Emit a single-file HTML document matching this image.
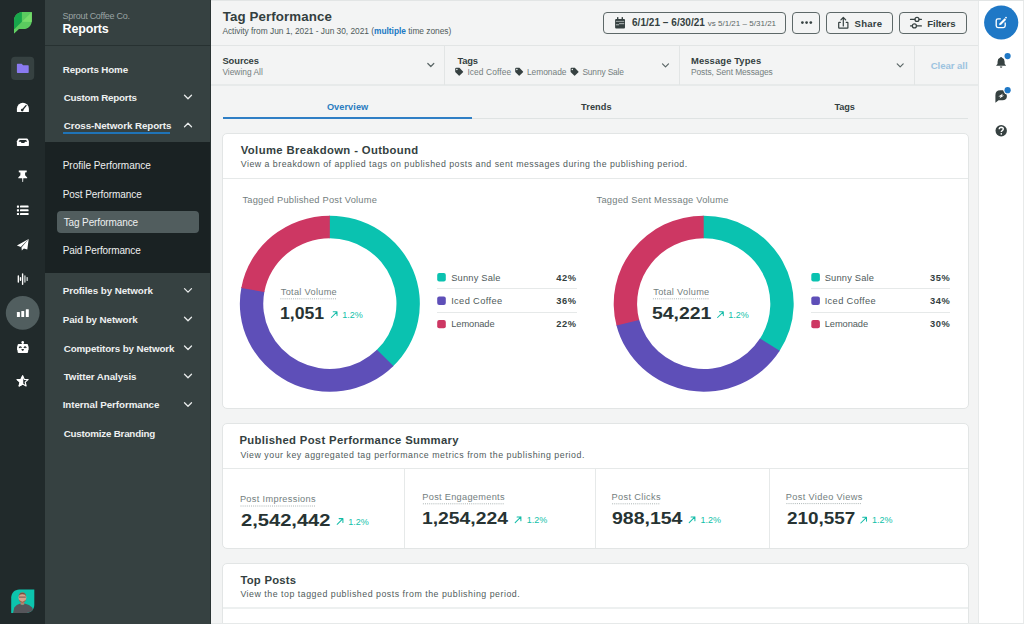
<!DOCTYPE html>
<html><head><meta charset="utf-8"><title>Tag Performance</title>
<style>
html,body{margin:0;padding:0;}
body{width:1024px;height:624px;position:relative;overflow:hidden;background:#f3f4f4;font-family:"Liberation Sans",sans-serif;}
.t{position:absolute;white-space:nowrap;line-height:1;font-family:"Liberation Sans",sans-serif;}
svg{overflow:visible}
</style></head><body>
<!-- left rail -->
<div style="position:absolute;left:0;top:0;width:45px;height:624px;background:#212a2b"></div>
<!-- side nav -->
<div style="position:absolute;left:45px;top:0;width:165px;height:624px;background:#364141"></div>
<div style="position:absolute;left:45px;top:45px;width:165px;height:1px;background:#273131"></div>
<div style="position:absolute;left:45px;top:142px;width:165px;height:131px;background:#1a2223"></div>
<div style="position:absolute;left:57px;top:210.75px;width:142.25px;height:22.5px;border-radius:4px;background:#515d5e"></div>
<div style="position:absolute;left:62.5px;top:132px;width:107.5px;height:1.6px;background:#1f73b7"></div>
<div style="position:absolute;left:209.5px;top:0;width:1px;height:624px;background:#2a3333"></div>
<!-- main -->
<div style="position:absolute;left:210.5px;top:0;width:768px;height:624px;background:#f3f4f4"></div>

<div style="position:absolute;left:210.5px;top:45px;width:768px;height:1px;background:#e2e5e5"></div>
<div style="position:absolute;left:210.5px;top:84px;width:768px;height:2px;background:#e7eaea"></div>
<div style="position:absolute;left:444px;top:45px;width:1px;height:40px;background:#e2e5e5"></div>
<div style="position:absolute;left:679px;top:45px;width:1px;height:40px;background:#e2e5e5"></div>
<div style="position:absolute;left:914px;top:45px;width:1px;height:40px;background:#e2e5e5"></div>
<!-- right rail -->
<div style="position:absolute;left:978px;top:0;width:46px;height:624px;background:#ffffff;border-left:1px solid #e7eaea;box-sizing:border-box"></div>
<div style="position:absolute;left:1023px;top:0;width:1px;height:624px;background:#e8eaea"></div>
<div style="position:absolute;left:210.5px;top:0;width:814px;height:1px;background:#e2e5e5"></div>

<!-- buttons -->
<div style="position:absolute;left:603.3px;top:11.6px;width:183.2px;height:22.1px;border:1px solid #5d6868;border-radius:4px;box-sizing:border-box"></div>
<div style="position:absolute;left:792.3px;top:11.6px;width:28.1px;height:22.1px;border:1px solid #5d6868;border-radius:4px;box-sizing:border-box"></div>
<div style="position:absolute;left:826.3px;top:11.6px;width:66.6px;height:22.1px;border:1px solid #5d6868;border-radius:4px;box-sizing:border-box"></div>
<div style="position:absolute;left:899.1px;top:11.6px;width:67.8px;height:22.1px;border:1px solid #5d6868;border-radius:4px;box-sizing:border-box"></div>

<!-- tabs underline -->
<div style="position:absolute;left:223px;top:118px;width:745px;height:1px;background:#dfe3e3"></div>
<div style="position:absolute;left:223px;top:117px;width:248.5px;height:2px;background:#2f7fc5"></div>

<!-- cards -->
<div style="position:absolute;left:222px;top:133px;width:747px;height:276px;background:#fff;border:1px solid #e2e5e5;border-radius:5px;box-sizing:border-box"></div>
<div style="position:absolute;left:223px;top:178px;width:745px;height:1px;background:#e6e9e9"></div>
<div style="position:absolute;left:437px;top:288px;width:140px;height:1px;background:#e6e9e9"></div>
<div style="position:absolute;left:437px;top:311.5px;width:140px;height:1px;background:#e6e9e9"></div>
<div style="position:absolute;left:811px;top:288px;width:138.5px;height:1px;background:#e6e9e9"></div>
<div style="position:absolute;left:811px;top:311.5px;width:138.5px;height:1px;background:#e6e9e9"></div>

<div style="position:absolute;left:222px;top:423px;width:747px;height:126px;background:#fff;border:1px solid #e2e5e5;border-radius:5px;box-sizing:border-box"></div>
<div style="position:absolute;left:223px;top:468px;width:745px;height:1px;background:#e6e9e9"></div>
<div style="position:absolute;left:404px;top:468px;width:1px;height:80px;background:#e6e9e9"></div>
<div style="position:absolute;left:594.5px;top:468px;width:1px;height:80px;background:#e6e9e9"></div>
<div style="position:absolute;left:769px;top:468px;width:1px;height:80px;background:#e6e9e9"></div>

<div style="position:absolute;left:222px;top:563px;width:747px;height:80px;background:#fff;border:1px solid #e2e5e5;border-radius:5px;box-sizing:border-box"></div>
<div style="position:absolute;left:223px;top:607px;width:745px;height:2px;background:#edf0f0"></div>
<div style="position:absolute;left:210.5px;top:623px;width:814px;height:1px;background:#e6e9e9"></div>

<!-- donuts & legends -->
<svg style="position:absolute;left:0;top:0" width="1024" height="624" viewBox="0 0 1024 624">
  <g id="donuts"><path d="M328.91,215.65 A90,88 0 0 1 392.82,366.52 L376.45,350.31 A66.6,65.3 0 0 0 329.15,238.35 Z" fill="#0ac2b0"/><path d="M393.49,365.88 A90,88 0 0 1 241.47,287.01 L264.45,291.30 A66.6,65.3 0 0 0 376.94,349.82 Z" fill="#5e4fb8"/><path d="M241.30,287.92 A90,88 0 0 1 329.85,215.65 L329.85,238.35 A66.6,65.3 0 0 0 264.32,291.97 Z" fill="#cd3763"/><path d="M702.76,215.65 A90,88 0 0 1 779.22,351.51 L759.59,339.17 A66.6,65.3 0 0 0 703.00,238.35 Z" fill="#0ac2b0"/><path d="M779.73,350.74 A90,88 0 0 1 616.30,324.64 L639.02,319.23 A66.6,65.3 0 0 0 759.96,338.59 Z" fill="#5e4fb8"/><path d="M616.53,325.53 A90,88 0 0 1 703.70,215.65 L703.70,238.35 A66.6,65.3 0 0 0 639.19,319.89 Z" fill="#cd3763"/></g>
</svg>

<svg style="position:absolute;left:0;top:0" width="1024" height="624" viewBox="0 0 1024 624">
<defs>
  <clipPath id="leaf"><path d="M14,33.6 L14,20.5 C14,15.8 17.8,12 22.5,12 L31.8,12 L31.8,20.8 C31.8,25.4 28.1,29.1 23.5,29.1 L18.8,29.1 Z"/></clipPath>
  <clipPath id="av"><path d="M11.2,612.9 L11.2,597.4 C11.2,593 14.8,589.4 19.2,589.4 L34.3,589.4 L34.3,604.9 C34.3,609.3 30.7,612.9 26.3,612.9 Z"/></clipPath>
</defs>
<!-- sprout logo -->
<g clip-path="url(#leaf)">
  <rect x="13" y="11" width="20" height="24" fill="#5bcb5f"/>
  <polygon points="13,11 21.9,11 21.9,21.8 13,30.5" fill="#17a64b"/>
  <polygon points="21.9,21.8 33,11 33,21.9" fill="#76dc6b"/>
  <polygon points="13,29.3 19.5,29.3 13,35" fill="#62d064"/>
</g>
<!-- folder button -->
<rect x="11.1" y="56.8" width="23.1" height="23.1" rx="4" fill="#364141"/>
<path d="M16.9,64.4 Q16.9,63.8 17.5,63.8 L21.6,63.8 L23.1,65.3 L28.1,65.3 Q28.7,65.3 28.7,65.9 L28.7,72.3 Q28.7,72.9 28.1,72.9 L17.5,72.9 Q16.9,72.9 16.9,72.3 Z" fill="#8a7af0"/>
<!-- gauge -->
<path d="M16.9,111.4 L16.9,108.8 A6,6 0 0 1 28.9,108.8 L28.9,111.4 Q28.9,112 28.3,112 L17.5,112 Q16.9,112 16.9,111.4 Z" fill="#fff"/>
<line x1="22.3" y1="110" x2="26" y2="105.6" stroke="#212a2b" stroke-width="1.3" stroke-linecap="round"/>
<circle cx="22.2" cy="110.1" r="1.3" fill="#212a2b"/>
<!-- inbox -->
<path d="M18.9,138.5 L27,138.5 Q27.5,138.5 27.8,139 L28.9,141.3 L28.9,145.3 Q28.9,145.9 28.3,145.9 L17.5,145.9 Q16.9,145.9 16.9,145.3 L16.9,141.3 L18.1,139 Q18.4,138.5 18.9,138.5 Z" fill="#fff"/>
<path d="M19.7,139.9 L26.1,139.9 L27.2,141.8 L25.1,141.8 L24.2,143 L21.6,143 L20.7,141.8 L18.6,141.8 Z" fill="#212a2b"/>
<!-- pin -->
<path d="M18.8,170.6 L26.7,170.6 L26.7,172.3 L25.1,172.6 L25.1,175.2 L27.2,177.6 L27.2,178.3 L23.3,178.3 L23.1,181.9 L22.4,181.9 L22.2,178.3 L18.3,178.3 L18.3,177.6 L20.4,175.2 L20.4,172.6 L18.8,172.3 Z" fill="#fff"/>
<!-- list -->
<g fill="#fff">
<rect x="16.9" y="205.5" width="2.1" height="2.2" rx="0.4"/><rect x="20" y="205.6" width="8.6" height="2" rx="0.6"/>
<rect x="16.9" y="209.2" width="2.1" height="2.2" rx="0.4"/><rect x="20" y="209.3" width="8.6" height="2" rx="0.6"/>
<rect x="16.9" y="212.9" width="2.1" height="2.2" rx="0.4"/><rect x="20" y="213" width="8.6" height="2" rx="0.6"/>
</g>
<!-- plane -->
<path d="M28.7,239 L16.9,245.6 L20.8,246.9 Z" fill="#fff"/>
<path d="M28.7,239 L21.5,247.6 L21.8,250.6 L23.9,248.4 L27.3,249.6 Z" fill="#fff"/>
<!-- waveform -->
<g stroke-linecap="round" stroke-width="1.4">
<line x1="18.35" y1="276" x2="18.35" y2="282" stroke="#fff"/>
<line x1="20.5" y1="277.8" x2="20.5" y2="280.2" stroke="#fff"/>
<line x1="22.6" y1="273.9" x2="22.6" y2="284.2" stroke="#fff"/>
<line x1="24.9" y1="276" x2="24.9" y2="282" stroke="#c3c9c9"/>
<line x1="27.2" y1="277.6" x2="27.2" y2="280.4" stroke="#c3c9c9"/>
</g>
<!-- reports active -->
<circle cx="22.7" cy="312.9" r="16.9" fill="#515e5f"/>
<g fill="#fff">
<rect x="16.9" y="312" width="3" height="5" rx="0.5"/>
<rect x="21.3" y="310.9" width="2.9" height="6.1" rx="0.5"/>
<rect x="25.8" y="309.2" width="3" height="7.8" rx="0.5"/>
</g>
<!-- bot -->
<circle cx="22.7" cy="342.4" r="1.3" fill="#fff"/>
<rect x="22.1" y="342.5" width="1.2" height="2" fill="#fff"/>
<rect x="17.6" y="344" width="10.5" height="8.9" rx="1.2" fill="#fff"/>
<rect x="17.1" y="346" width="11.5" height="4.5" rx="1" fill="#fff"/>
<path d="M19.2,347.9 Q20.3,345.7 21.4,347.9 M24,347.9 Q25.1,345.7 26.2,347.9" stroke="#212a2b" stroke-width="1.15" fill="none"/>
<path d="M21.4,349.1 L24,349.1 Q23.9,350.9 22.7,350.9 Q21.5,350.9 21.4,349.1 Z" fill="#212a2b"/>
<!-- star -->
<path d="M22.65,375.9 L24.2,379.3 L28.1,379.6 L25.2,382.1 L26.1,385.9 L22.65,383.9 L19.2,385.9 L20.1,382.1 L17.2,379.6 L21.1,379.3 Z" fill="none" stroke="#fff" stroke-width="1.2" stroke-linejoin="round"/>
<path d="M22.65,375.9 L21.1,379.3 L17.2,379.6 L20.1,382.1 L19.2,385.9 L22.65,383.9 Z" fill="#fff" stroke="#fff" stroke-width="1.2" stroke-linejoin="round"/>
<!-- avatar -->
<g clip-path="url(#av)">
  <rect x="10" y="588" width="26" height="26" fill="#0cc4ad"/>
  <path d="M12.8,614 L14.3,607.6 Q16.3,604.6 20.3,603.6 L22.4,605.2 L24.6,603.6 Q29.6,604.6 32.2,607.6 L34.8,614 Z" fill="#56565b"/>
  <rect x="20.6" y="601.5" width="3.6" height="3.2" fill="#b7806d"/>
  <ellipse cx="22.4" cy="597.4" rx="3.9" ry="4.9" fill="#d5a28c"/>
  <path d="M18.7,596.5 Q18.6,592.6 22.4,592.4 Q26.2,592.6 26.1,596.5 Q25.5,594 22.4,594.2 Q19.3,594 18.7,596.5 Z" fill="#7a5140"/>
  <path d="M19,599.6 Q22.4,603.8 25.8,599.6 Q25.6,602.4 22.4,602.8 Q19.2,602.4 19,599.6 Z" fill="#9a6650"/>
  <rect x="19" y="596.6" width="6.8" height="1" fill="#4a3a36" opacity="0.7"/>
</g>

<!-- right rail: compose -->
<circle cx="1001.2" cy="22.5" r="17.1" fill="#1f78c6"/>
<path d="M1000.8,18.8 L998,18.8 Q996.2,18.8 996.2,20.6 L996.2,25.8 Q996.2,27.6 998,27.6 L1003.4,27.6 Q1005.2,27.6 1005.2,25.8 L1005.2,22.6" fill="none" stroke="#fff" stroke-width="1.35"/>
<path d="M999.1,25.2 L999.6,23.2 L1004.6,18.2 L1006.1,19.7 L1001.1,24.7 Z" fill="#fff"/>
<circle cx="1006" cy="17.6" r="0.9" fill="#fff"/>
<!-- bell -->
<path d="M1001.1,56.9 Q1002,56.9 1002.2,57.8 Q1004.5,58.6 1004.6,61.5 L1004.7,64 L1006,65.4 L1006,65.8 L996.2,65.8 L996.2,65.4 L997.5,64 L997.6,61.5 Q997.7,58.6 1000,57.8 Q1000.2,56.9 1001.1,56.9 Z" fill="#364141"/>
<path d="M999.8,66.6 L1002.4,66.6 Q1002.2,67.8 1001.1,67.8 Q1000,67.8 999.8,66.6 Z" fill="#364141"/>
<circle cx="1007.6" cy="56.1" r="4.2" fill="#fff"/><circle cx="1007.6" cy="56.1" r="3.1" fill="#1f78c6"/>
<!-- bubble -->
<path d="M995.4,102.8 L995.4,95.2 Q995.4,90.3 1000.3,90.3 L1003.5,90.3 Q1004.5,92.5 1006.4,94 Q1007,95.5 1006.9,96.5 Q1006.6,100.3 1002.5,100.3 L998.6,100.3 Z" fill="#364141"/>
<path d="M1003,93.5 L998.3,96.5 L1000.7,96.5 L999.5,98.6 L1004.1,95.5 L1001.8,95.5 Z" fill="#fff"/>
<circle cx="1007.6" cy="90.2" r="4.2" fill="#fff"/><circle cx="1007.6" cy="90.2" r="3.1" fill="#1f78c6"/>
<!-- help -->
<circle cx="1001.2" cy="130.8" r="5.7" fill="#364141"/>
<path d="M999.2,129.3 Q999.3,127.3 1001.3,127.3 Q1003.3,127.4 1003.3,129.1 Q1003.3,130.2 1002,130.8 Q1001.3,131.2 1001.3,132" fill="none" stroke="#fff" stroke-width="1.4"/>
<circle cx="1001.3" cy="133.8" r="0.85" fill="#fff"/>

<!-- top buttons icons -->
<g fill="#364141">
<rect x="615.1" y="19" width="9.9" height="9.4" rx="1"/>
<rect x="617" y="16.9" width="1.4" height="3" rx="0.5"/>
<rect x="621.6" y="16.9" width="1.4" height="3" rx="0.5"/>
</g>
<rect x="615.9" y="20.9" width="8.3" height="0.9" fill="#a9b0b0"/>
<rect x="619.1" y="23.1" width="5.1" height="1.1" fill="#a9b0b0"/>
<rect x="615.9" y="24.2" width="3.2" height="1.1" fill="#a9b0b0"/>
<g fill="#364141"><circle cx="802.4" cy="22.6" r="1.35"/><circle cx="806.6" cy="22.6" r="1.35"/><circle cx="810.8" cy="22.6" r="1.35"/></g>
<g fill="none" stroke="#364141" stroke-width="1.2" stroke-linecap="round" stroke-linejoin="round">
<path d="M840.4,22.3 L839.2,22.3 Q838.7,22.3 838.7,22.8 L838.7,27.7 Q838.7,28.2 839.2,28.2 L847.4,28.2 Q847.9,28.2 847.9,27.7 L847.9,22.8 Q847.9,22.3 847.4,22.3 L846.2,22.3"/>
<path d="M843.3,25.9 L843.3,17.6 M840.9,19.9 L843.3,17.5 L845.7,19.9"/>
<path d="M910.5,19.4 L914.9,19.4 M919.1,19.4 L921.4,19.4 M910.5,25.9 L912.3,25.9 M916.5,25.9 L921.4,25.9"/>
<circle cx="917" cy="19.4" r="2"/>
<circle cx="914.4" cy="25.9" r="2"/>
</g>
<!-- tags -->
<g fill="#364141">
<path d="M455.2,68.8 Q455.2,67.8 456.2,67.8 L459.4,67.8 L463,71.4 Q463.4,71.8 463,72.2 L459.6,75.6 Q459.2,76 458.8,75.6 L455.2,72 Z"/>
<path d="M515.2,68.8 Q515.2,67.8 516.2,67.8 L519.4,67.8 L523,71.4 Q523.4,71.8 523,72.2 L519.6,75.6 Q519.2,76 518.8,75.6 L515.2,72 Z"/>
<path d="M570.6,68.8 Q570.6,67.8 571.6,67.8 L574.8,67.8 L578.4,71.4 Q578.8,71.8 578.4,72.2 L575,75.6 Q574.6,76 574.2,75.6 L570.6,72 Z"/>
</g>
<g fill="#f3f4f4"><circle cx="456.9" cy="69.5" r="0.75"/><circle cx="516.9" cy="69.5" r="0.75"/><circle cx="572.3" cy="69.5" r="0.75"/></g>
<!-- filter chevrons -->
<g fill="none" stroke="#5a6666" stroke-width="1.2" stroke-linecap="round" stroke-linejoin="round">
<path d="M427.8,63.5 L430.8,66.5 L433.8,63.5"/>
<path d="M662.5,63.9 L665.5,66.9 L668.5,63.9"/>
<path d="M897.2,63.9 L900.2,66.9 L903.2,63.9"/>
</g>
<!-- nav chevrons -->
<g fill="none" stroke="#e8ebeb" stroke-width="1.3" stroke-linecap="round" stroke-linejoin="round">
<path d="M184.5,95.3 L188,98.8 L191.5,95.3"/>
<path d="M184.5,126.8 L188,123.3 L191.5,126.8"/>
<path d="M184.5,288.6 L188,292.1 L191.5,288.6"/>
<path d="M184.5,317.3 L188,320.8 L191.5,317.3"/>
<path d="M184.5,346 L188,349.5 L191.5,346"/>
<path d="M184.5,374.3 L188,377.8 L191.5,374.3"/>
<path d="M184.5,402.8 L188,406.3 L191.5,402.8"/>
</g>
<!-- legend squares -->
<g>
<rect x="437.2" y="273" width="8.6" height="8.4" rx="2" fill="#0ac2b0"/>
<rect x="437.2" y="296.5" width="8.6" height="8.4" rx="2" fill="#5e4fb8"/>
<rect x="437.2" y="319.9" width="8.6" height="8.4" rx="2" fill="#cd3763"/>
<rect x="811.3" y="273" width="8.6" height="8.4" rx="2" fill="#0ac2b0"/>
<rect x="811.3" y="296.5" width="8.6" height="8.4" rx="2" fill="#5e4fb8"/>
<rect x="811.3" y="319.9" width="8.6" height="8.4" rx="2" fill="#cd3763"/>
</g>
<!-- teal arrows -->
<g fill="none" stroke="#14bca8" stroke-width="1.05" stroke-linecap="round" stroke-linejoin="round">
<path d="M331.3,317.5 L337,311.8 M333.2,311.8 L337,311.8 L337,315.6"/>
<path d="M717.6,317.5 L723.3,311.8 M719.5,311.8 L723.3,311.8 L723.3,315.6"/>
<path d="M337.2,524.3 L342.9,518.6 M339.1,518.6 L342.9,518.6 L342.9,522.4"/>
<path d="M515.2,522.6 L520.9,516.9 M517.1,516.9 L520.9,516.9 L520.9,520.7"/>
<path d="M689.2,522.6 L694.9,516.9 M691.1,516.9 L694.9,516.9 L694.9,520.7"/>
<path d="M860.8,523 L866.5,517.3 M862.7,517.3 L866.5,517.3 L866.5,521.1"/>
</g>
<!-- dotted underlines -->
<g stroke="#a3adad" stroke-width="0.9" stroke-dasharray="1 1.1">
<line x1="280.4" y1="298.8" x2="336" y2="298.8"/>
<line x1="652.9" y1="298.8" x2="708.5" y2="298.8"/>
<line x1="240.5" y1="506" x2="315" y2="506"/>
<line x1="422.9" y1="503.8" x2="503.8" y2="503.8"/>
<line x1="612.1" y1="503.8" x2="660" y2="503.8"/>
<line x1="786.4" y1="503.6" x2="862" y2="503.6"/>
</g>
</svg>

<div class="t" id="t0" style="left:62.60px;top:12.23px;font-size:9px;font-weight:400;color:#9aa3a3;letter-spacing:-0.281px;">Sprout Coffee Co.</div>
<div class="t" id="t1" style="left:62.60px;top:23.27px;font-size:12.5px;font-weight:700;color:#ffffff;letter-spacing:-0.167px;">Reports</div>
<div class="t" id="t2" style="left:62.70px;top:64.60px;font-size:9.8px;font-weight:700;color:#eef0f0;letter-spacing:-0.136px;">Reports Home</div>
<div class="t" id="t3" style="left:63.70px;top:92.80px;font-size:9.8px;font-weight:700;color:#eef0f0;letter-spacing:-0.231px;">Custom Reports</div>
<div class="t" id="t4" style="left:63.70px;top:121.30px;font-size:9.8px;font-weight:700;color:#eef0f0;letter-spacing:-0.085px;">Cross-Network Reports</div>
<div class="t" id="t5" style="left:62.70px;top:161.38px;font-size:10px;font-weight:400;color:#eef0f0;letter-spacing:-0.014px;">Profile Performance</div>
<div class="t" id="t6" style="left:62.70px;top:189.63px;font-size:10px;font-weight:400;color:#eef0f0;letter-spacing:-0.067px;">Post Performance</div>
<div class="t" id="t7" style="left:63.70px;top:217.88px;font-size:10px;font-weight:400;color:#eef0f0;letter-spacing:-0.125px;">Tag Performance</div>
<div class="t" id="t8" style="left:62.70px;top:246.38px;font-size:10px;font-weight:400;color:#eef0f0;letter-spacing:-0.133px;">Paid Performance</div>
<div class="t" id="t9" style="left:62.70px;top:286.05px;font-size:9.8px;font-weight:700;color:#eef0f0;letter-spacing:-0.069px;">Profiles by Network</div>
<div class="t" id="t10" style="left:62.70px;top:314.80px;font-size:9.8px;font-weight:700;color:#eef0f0;letter-spacing:-0.089px;">Paid by Network</div>
<div class="t" id="t11" style="left:63.70px;top:343.55px;font-size:9.8px;font-weight:700;color:#eef0f0;letter-spacing:-0.119px;">Competitors by Network</div>
<div class="t" id="t12" style="left:63.70px;top:371.80px;font-size:9.8px;font-weight:700;color:#eef0f0;letter-spacing:-0.083px;">Twitter Analysis</div>
<div class="t" id="t13" style="left:62.70px;top:400.30px;font-size:9.8px;font-weight:700;color:#eef0f0;letter-spacing:-0.066px;">Internal Performance</div>
<div class="t" id="t14" style="left:63.70px;top:428.70px;font-size:9.8px;font-weight:700;color:#eef0f0;letter-spacing:-0.224px;">Customize Branding</div>
<div class="t" id="t15" style="left:222.70px;top:10.14px;font-size:13.3px;font-weight:700;color:#343f3f;letter-spacing:0.107px;">Tag Performance</div>
<div class="t" id="t16" style="left:222.40px;top:27.19px;font-size:8.4px;font-weight:400;color:#4f5b5b;letter-spacing:-0.025px;">Activity from Jun 1, 2021 - Jun 30, 2021 (<b style="color:#2079c3">multiple</b> time zones)</div>
<div class="t" id="t17" style="left:632.00px;top:18.44px;font-size:10px;font-weight:700;color:#343f3f;letter-spacing:0.040px;">6/1/21 – 6/30/21</div>
<div class="t" id="t18" style="left:707.70px;top:20.13px;font-size:8px;font-weight:400;color:#5b6666;letter-spacing:0.017px;">vs 5/1/21 – 5/31/21</div>
<div class="t" id="t19" style="left:854.60px;top:18.57px;font-size:9.6px;font-weight:700;color:#343f3f;letter-spacing:0.200px;">Share</div>
<div class="t" id="t20" style="left:927.30px;top:18.57px;font-size:9.6px;font-weight:700;color:#343f3f;letter-spacing:-0.083px;">Filters</div>
<div class="t" id="t21" style="left:222.40px;top:55.94px;font-size:9.4px;font-weight:700;color:#343f3f;letter-spacing:-0.067px;">Sources</div>
<div class="t" id="t22" style="left:222.40px;top:68.49px;font-size:8.4px;font-weight:400;color:#737e7e;letter-spacing:0.000px;">Viewing All</div>
<div class="t" id="t23" style="left:457.40px;top:56.04px;font-size:9.4px;font-weight:700;color:#343f3f;letter-spacing:-0.167px;">Tags</div>
<div class="t" id="t24" style="left:467.40px;top:68.49px;font-size:8.4px;font-weight:400;color:#737e7e;letter-spacing:0.100px;">Iced Coffee</div>
<div class="t" id="t25" style="left:526.90px;top:68.49px;font-size:8.4px;font-weight:400;color:#737e7e;letter-spacing:0.000px;">Lemonade</div>
<div class="t" id="t26" style="left:582.40px;top:68.49px;font-size:8.4px;font-weight:400;color:#737e7e;letter-spacing:-0.139px;">Sunny Sale</div>
<div class="t" id="t27" style="left:691.00px;top:56.14px;font-size:9.4px;font-weight:700;color:#343f3f;letter-spacing:0.125px;">Message Types</div>
<div class="t" id="t28" style="left:691.00px;top:67.99px;font-size:8.4px;font-weight:400;color:#737e7e;letter-spacing:-0.084px;">Posts, Sent Messages</div>
<div class="t" id="t29" style="left:930.70px;top:61.27px;font-size:9.6px;font-weight:700;color:#9cc3e0;letter-spacing:-0.050px;">Clear all</div>
<div class="t" id="t30" style="left:326.90px;top:103.21px;font-size:9.2px;font-weight:700;color:#2a7cc0;letter-spacing:0.071px;">Overview</div>
<div class="t" id="t31" style="left:581.10px;top:103.21px;font-size:9.2px;font-weight:700;color:#343f3f;letter-spacing:0.060px;">Trends</div>
<div class="t" id="t32" style="left:834.40px;top:103.21px;font-size:9.2px;font-weight:700;color:#343f3f;letter-spacing:-0.100px;">Tags</div>
<div class="t" id="t33" style="left:240.80px;top:144.73px;font-size:11.3px;font-weight:700;color:#343f3f;letter-spacing:0.365px;">Volume Breakdown - Outbound</div>
<div class="t" id="t34" style="left:240.80px;top:160.35px;font-size:8.8px;font-weight:400;color:#4f5b5b;letter-spacing:0.484px;">View a breakdown of applied tags on published posts and sent messages during the publishing period.</div>
<div class="t" id="t35" style="left:242.40px;top:195.63px;font-size:9.3px;font-weight:400;color:#737e7e;letter-spacing:0.215px;">Tagged Published Post Volume</div>
<div class="t" id="t36" style="left:596.60px;top:195.63px;font-size:9.3px;font-weight:400;color:#737e7e;letter-spacing:0.228px;">Tagged Sent Message Volume</div>
<div class="t" id="t37" style="left:280.80px;top:287.61px;font-size:9.2px;font-weight:400;color:#737e7e;letter-spacing:0.300px;">Total Volume</div>
<div class="t" id="t38" style="left:280.03px;top:304.93px;font-size:16.5px;font-weight:700;color:#273333;letter-spacing:0.000px;transform:scaleX(1.0700);transform-origin:0 0;">1,051</div>
<div class="t" id="t39" style="left:342.30px;top:310.88px;font-size:9px;font-weight:400;color:#0fbfa9;letter-spacing:0.000px;">1.2%</div>
<div class="t" id="t40" style="left:653.30px;top:287.61px;font-size:9.2px;font-weight:400;color:#737e7e;letter-spacing:0.300px;">Total Volume</div>
<div class="t" id="t41" style="left:652.42px;top:304.93px;font-size:16.5px;font-weight:700;color:#273333;letter-spacing:0.000px;transform:scaleX(1.1776);transform-origin:0 0;">54,221</div>
<div class="t" id="t42" style="left:728.20px;top:310.88px;font-size:9px;font-weight:400;color:#0fbfa9;letter-spacing:0.000px;">1.2%</div>
<div class="t" id="t43" style="left:451.20px;top:273.63px;font-size:9.3px;font-weight:400;color:#4f5b5b;letter-spacing:0.189px;">Sunny Sale</div>
<div class="t" id="t44" style="left:556.30px;top:273.63px;font-size:9.3px;font-weight:700;color:#343f3f;letter-spacing:0.600px;">42%</div>
<div class="t" id="t45" style="left:451.20px;top:297.03px;font-size:9.3px;font-weight:400;color:#4f5b5b;letter-spacing:0.350px;">Iced Coffee</div>
<div class="t" id="t46" style="left:556.30px;top:297.03px;font-size:9.3px;font-weight:700;color:#343f3f;letter-spacing:0.600px;">36%</div>
<div class="t" id="t47" style="left:451.20px;top:320.43px;font-size:9.3px;font-weight:400;color:#4f5b5b;letter-spacing:-0.071px;">Lemonade</div>
<div class="t" id="t48" style="left:556.30px;top:320.43px;font-size:9.3px;font-weight:700;color:#343f3f;letter-spacing:0.600px;">22%</div>
<div class="t" id="t49" style="left:824.70px;top:273.63px;font-size:9.3px;font-weight:400;color:#4f5b5b;letter-spacing:0.189px;">Sunny Sale</div>
<div class="t" id="t50" style="left:929.90px;top:273.63px;font-size:9.3px;font-weight:700;color:#343f3f;letter-spacing:0.600px;">35%</div>
<div class="t" id="t51" style="left:824.70px;top:297.03px;font-size:9.3px;font-weight:400;color:#4f5b5b;letter-spacing:0.350px;">Iced Coffee</div>
<div class="t" id="t52" style="left:929.90px;top:297.03px;font-size:9.3px;font-weight:700;color:#343f3f;letter-spacing:0.600px;">34%</div>
<div class="t" id="t53" style="left:824.70px;top:320.43px;font-size:9.3px;font-weight:400;color:#4f5b5b;letter-spacing:-0.071px;">Lemonade</div>
<div class="t" id="t54" style="left:929.90px;top:320.43px;font-size:9.3px;font-weight:700;color:#343f3f;letter-spacing:0.600px;">30%</div>
<div class="t" id="t55" style="left:239.40px;top:435.43px;font-size:11.3px;font-weight:700;color:#343f3f;letter-spacing:0.326px;">Published Post Performance Summary</div>
<div class="t" id="t56" style="left:240.40px;top:450.85px;font-size:8.8px;font-weight:400;color:#4f5b5b;letter-spacing:0.520px;">View your key aggregated tag performance metrics from the publishing period.</div>
<div class="t" id="t57" style="left:239.90px;top:494.81px;font-size:9.2px;font-weight:400;color:#737e7e;letter-spacing:0.347px;">Post Impressions</div>
<div class="t" id="t58" style="left:241.20px;top:511.63px;font-size:16.5px;font-weight:700;color:#273333;letter-spacing:0.000px;transform:scaleX(1.2192);transform-origin:0 0;">2,542,442</div>
<div class="t" id="t59" style="left:348.30px;top:517.58px;font-size:9px;font-weight:400;color:#0fbfa9;letter-spacing:0.000px;">1.2%</div>
<div class="t" id="t60" style="left:422.30px;top:493.11px;font-size:9.2px;font-weight:400;color:#737e7e;letter-spacing:0.307px;">Post Engagements</div>
<div class="t" id="t61" style="left:422.43px;top:509.93px;font-size:16.5px;font-weight:700;color:#273333;letter-spacing:0.000px;transform:scaleX(1.1699);transform-origin:0 0;">1,254,224</div>
<div class="t" id="t62" style="left:526.70px;top:515.88px;font-size:9px;font-weight:400;color:#0fbfa9;letter-spacing:0.000px;">1.2%</div>
<div class="t" id="t63" style="left:611.50px;top:493.11px;font-size:9.2px;font-weight:400;color:#737e7e;letter-spacing:0.360px;">Post Clicks</div>
<div class="t" id="t64" style="left:611.62px;top:509.93px;font-size:16.5px;font-weight:700;color:#273333;letter-spacing:0.000px;transform:scaleX(1.1814);transform-origin:0 0;">988,154</div>
<div class="t" id="t65" style="left:700.40px;top:515.88px;font-size:9px;font-weight:400;color:#0fbfa9;letter-spacing:0.000px;">1.2%</div>
<div class="t" id="t66" style="left:785.80px;top:492.91px;font-size:9.2px;font-weight:400;color:#737e7e;letter-spacing:0.353px;">Post Video Views</div>
<div class="t" id="t67" style="left:787.10px;top:510.33px;font-size:16.5px;font-weight:700;color:#273333;letter-spacing:0.000px;transform:scaleX(1.1441);transform-origin:0 0;">210,557</div>
<div class="t" id="t68" style="left:871.90px;top:516.28px;font-size:9px;font-weight:400;color:#0fbfa9;letter-spacing:0.000px;">1.2%</div>
<div class="t" id="t69" style="left:240.40px;top:574.83px;font-size:11.3px;font-weight:700;color:#343f3f;letter-spacing:0.250px;">Top Posts</div>
<div class="t" id="t70" style="left:240.40px;top:589.85px;font-size:8.8px;font-weight:400;color:#4f5b5b;letter-spacing:0.516px;">View the top tagged published posts from the publishing period.</div>

</body></html>
